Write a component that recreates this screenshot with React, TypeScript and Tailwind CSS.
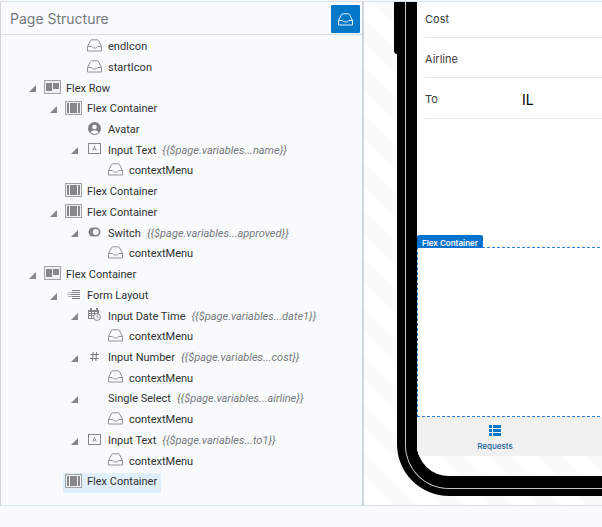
import type { ReactNode } from "react";

type IconName =
  | "slot"
  | "row"
  | "column"
  | "avatar"
  | "text"
  | "switch"
  | "form"
  | "date"
  | "number"
  | "none";

type TreeNode = {
  level: 1 | 2 | 3 | 4;
  icon: IconName;
  label: string;
  binding?: string;
  open?: boolean;
  selected?: boolean;
};

const nodes: TreeNode[] = [
  { level: 3, icon: "slot", label: "endIcon" },
  { level: 3, icon: "slot", label: "startIcon" },
  { level: 1, icon: "row", label: "Flex Row", open: true },
  { level: 2, icon: "column", label: "Flex Container", open: true },
  { level: 3, icon: "avatar", label: "Avatar" },
  { level: 3, icon: "text", label: "Input Text", binding: "{{$page.variables...name}}", open: true },
  { level: 4, icon: "slot", label: "contextMenu" },
  { level: 2, icon: "column", label: "Flex Container" },
  { level: 2, icon: "column", label: "Flex Container", open: true },
  { level: 3, icon: "switch", label: "Switch", binding: "{{$page.variables...approved}}", open: true },
  { level: 4, icon: "slot", label: "contextMenu" },
  { level: 1, icon: "row", label: "Flex Container", open: true },
  { level: 2, icon: "form", label: "Form Layout", open: true },
  { level: 3, icon: "date", label: "Input Date Time", binding: "{{$page.variables...date1}}", open: true },
  { level: 4, icon: "slot", label: "contextMenu" },
  { level: 3, icon: "number", label: "Input Number", binding: "{{$page.variables...cost}}", open: true },
  { level: 4, icon: "slot", label: "contextMenu" },
  { level: 3, icon: "none", label: "Single Select", binding: "{{$page.variables...airline}}", open: true },
  { level: 4, icon: "slot", label: "contextMenu" },
  { level: 3, icon: "text", label: "Input Text", binding: "{{$page.variables...to1}}", open: true },
  { level: 4, icon: "slot", label: "contextMenu" },
  { level: 2, icon: "column", label: "Flex Container", selected: true },
];

const indent = { 1: "pl-[28px]", 2: "pl-[49px]", 3: "pl-[70px]", 4: "pl-[91px]" };

function SlotIcon() {
  return (
    <svg width="15" height="13" viewBox="0 0 15 13" fill="none" stroke="currentColor" aria-hidden="true">
      <path d="M.5 7.5 3.4 1.8Q3.8.8 4.8.8h5.4q1 0 1.4 1l2.9 5.700V12H.5V7.500H4q.7 0 1 .6.4.9 1.400.9h2.200q1 0 1.400-.9.300-.6 1-.6h3.500" />
    </svg>
  );
}

function FrameIcon({ children }: { children: ReactNode }) {
  return (
    <svg width="17" height="14" viewBox="0 0 17 14" aria-hidden="true">
      <rect x=".5" y=".5" width="16" height="13" fill="#f1f2f3" stroke="#a0a2a4" />
      {children}
    </svg>
  );
}

function NodeIcon({ name }: { name: IconName }) {
  switch (name) {
    case "slot":
      return <SlotIcon />;
    case "row":
      return (
        <FrameIcon>
          <path d="M2 3h6v8H2zM9 3h6v6H9z" fill="#85878a" />
        </FrameIcon>
      );
    case "column":
      return (
        <FrameIcon>
          <path d="M2 2h2v10H2zM5 2h7v10H5zM13 2h2v10h-2z" fill="#85878a" />
        </FrameIcon>
      );
    case "avatar":
      return (
        <svg width="13" height="13" viewBox="0 0 13 13" aria-hidden="true">
          <circle cx="6.5" cy="6.5" r="6.5" fill="#7d7f82" />
          <circle cx="6.5" cy="5" r="2.3" fill="#f8fafc" />
          <path d="M2.5 10.3q1-2 4-2t4 2q-1.600 1.700-4 1.700t-4-1.700z" fill="#f8fafc" />
        </svg>
      );
    case "text":
      return (
        <svg width="13" height="11" viewBox="0 0 13 11" fill="none" stroke="#85878a" aria-hidden="true">
          <rect x=".5" y=".5" width="12" height="10" />
          <path d="M4.800 7.500 6.500 3.300l1.700 4.200M5.300 6.200h2.400" strokeWidth=".8" />
        </svg>
      );
    case "switch":
      return (
        <svg width="13" height="10" viewBox="0 0 13 10" aria-hidden="true">
          <rect x=".5" y=".5" width="12" height="9" rx="4.5" fill="#808285" />
          <circle cx="7.8" cy="5" r="3" fill="#f8fafc" />
        </svg>
      );
    case "form":
      return (
        <svg width="13" height="9" viewBox="0 0 13 9" aria-hidden="true">
          <path d="M5 0h8v1H5zM5 2h8v1H5zM4 4h9v1H4zM5 6h8v1H5zM5 8h8v1H5z" fill="#7c7e81" />
          <path d="M1 2h4v1H1zM0 4h4v1H0zM1 6h4v1H1z" fill="#b4b6b8" />
        </svg>
      );
    case "date":
      return (
        <svg width="13" height="13" viewBox="0 0 13 13" aria-hidden="true">
          <path d="M0 2h2V0h2v2h4V0h2v2h1v9H0z" fill="#85878a" />
          <path d="M1 4h2v1H1zM4 4h2v1H4zM7 4h2v1H7zM1 6h2v1H1zM4 6h2v1H4zM1 8h2v2H1zM4 8h2v2H4z" fill="#f8fafc" />
          <circle cx="9" cy="9" r="3.4" fill="#f8fafc" stroke="#85878a" />
          <path d="M9 7v2.200h1.700" fill="none" stroke="#85878a" strokeWidth=".8" />
        </svg>
      );
    case "number":
      return (
        <svg width="9" height="9" viewBox="0 0 9 9" fill="none" stroke="#7c7e81" aria-hidden="true">
          <path d="M3.200 0 2.400 9M6.600 0l-.8 9M.5 2.500h8.500M0 6.500h8.500" />
        </svg>
      );
    default:
      return null;
  }
}

function TreeRow({ node }: { node: TreeNode }) {
  return (
    <li
      role="treeitem"
      aria-level={node.level}
      aria-selected={!!node.selected}
      className={`flex items-center gap-[6px] ${indent[node.level]}`}
    >
      {node.open ? (
        <button type="button" aria-label={`Collapse ${node.label}`} className="w-[7px] shrink-0">
          <svg width="7" height="7" viewBox="0 0 7 7" aria-hidden="true">
            <path d="M7 0v7H0z" fill="#85878a" />
          </svg>
        </button>
      ) : (
        <span className="w-[7px] shrink-0" />
      )}
      <button
        type="button"
        className={`flex h-5 items-center whitespace-nowrap pl-[2px] pr-1 ${node.selected ? "bg-[#dfeef8]" : ""}`}
      >
        <span className="mr-[5px] flex w-[17px] justify-center pb-1 text-[#929497]">
          <NodeIcon name={node.icon} />
        </span>
        <span>{node.label}</span>
        {node.binding && <em className="ml-[6px] text-[#77797c]">{node.binding}</em>}
      </button>
    </li>
  );
}

function Field({ id, label, value, className }: { id: string; label: string; value: string; className: string }) {
  return (
    <div className={`ml-2 flex items-center border-b border-[#e8e8e8] ${className}`}>
      <label htmlFor={id} className="w-[97px] shrink-0 text-[#3a3a3a]">
        {label}
      </label>
      <input id={id} defaultValue={value} className="min-w-0 flex-1 bg-transparent text-sm text-black outline-none" />
    </div>
  );
}

export default function App() {
  return (
    <div className="min-h-screen bg-[#f8fafc] pt-px font-['Inter','Liberation_Sans',sans-serif] text-[11px] text-[#303234]">
      <main className="flex border-y border-[#d5e1e8]">
        <section className="w-[364px] shrink-0 border-l border-r-2 border-l-[#d0d5d9] border-r-[#ced6dc]">
          <header className="flex h-[33px] items-center justify-between border-b border-[#d3e2ec] pl-[9px] pr-[2px] pt-[2px]">
            <h1 className="text-sm text-[#77797c]">Page Structure</h1>
            <button
              type="button"
              aria-label="Show slots"
              className="flex h-7 w-[29px] items-center justify-center rounded-[1px] bg-[#0478c8] text-[#e4f1fa]"
            >
              <SlotIcon />
            </button>
          </header>
          <ul
            role="tree"
            aria-label="Page Structure"
            className="mb-3 mt-[2px] grid h-[456px] auto-rows-fr font-['Roboto','Liberation_Sans',sans-serif]"
          >
            {nodes.map((node, i) => (
              <TreeRow key={i} node={node} />
            ))}
          </ul>
        </section>

        <section className="flex min-w-0 flex-1 overflow-hidden bg-[repeating-linear-gradient(45deg,#fbfbfb_0px,#fbfbfb_4px,#ffffff_4px,#ffffff_21px,#fbfbfb_21px,#fbfbfb_34px)] pb-[9px] pl-[33px]">
          <div className="relative flex flex-1 rounded-bl-[52px] border-b-[7px] border-l-8 border-black">
            <span className="absolute -left-[11px] top-0 h-[52px] w-1 rounded-bl-[3px] bg-black" />
            <div className="flex flex-1 rounded-bl-[44px] border-b border-l border-[#c4c4c4] bg-black">
              <div className="flex flex-1 overflow-hidden rounded-bl-[43px] border-b-[12px] border-l-[11px] border-black bg-[repeating-linear-gradient(45deg,#fbfbfb_0px,#fbfbfb_14px,#ffffff_14px,#ffffff_31px,#fbfbfb_31px,#fbfbfb_34px)] pb-5">
                <div className="flex min-w-0 flex-1 flex-col bg-white">
                  <form>
                    <Field id="cost" label="Cost" value="" className="h-9" />
                    <Field id="airline" label="Airline" value="" className="h-10 pt-[3px]" />
                    <Field id="to" label="To" value="IL" className="h-[41px] pt-[3px]" />
                  </form>
                  <div className="relative mt-32 flex-1 border border-r-0 border-dashed border-[#2b83d6]">
                    <span className="absolute -left-px -top-[13px] flex h-[13px] items-center rounded-t-[2px] bg-[#0572ce] px-[5px] pt-[2px] text-[8px] font-semibold text-white">
                      Flex Container
                    </span>
                  </div>
                  <nav className="flex h-[39px] bg-[#f1f1f1]">
                    <a
                      href="#requests"
                      className="flex w-[156px] flex-col items-center gap-1 pt-2 text-[8px] leading-[10px] font-medium text-[#17649c]"
                    >
                      <svg width="12" height="12" viewBox="0 0 12 12" fill="#0478c8" aria-hidden="true">
                        <path d="M0 0h3v3H0zM4 0h8v3H4zM0 4h3v3H0zM4 4h8v3H4zM0 8h3v3H0zM4 8h8v3H4z" />
                      </svg>
                      Requests
                    </a>
                  </nav>
                </div>
              </div>
            </div>
          </div>
        </section>
      </main>
    </div>
  );
}
